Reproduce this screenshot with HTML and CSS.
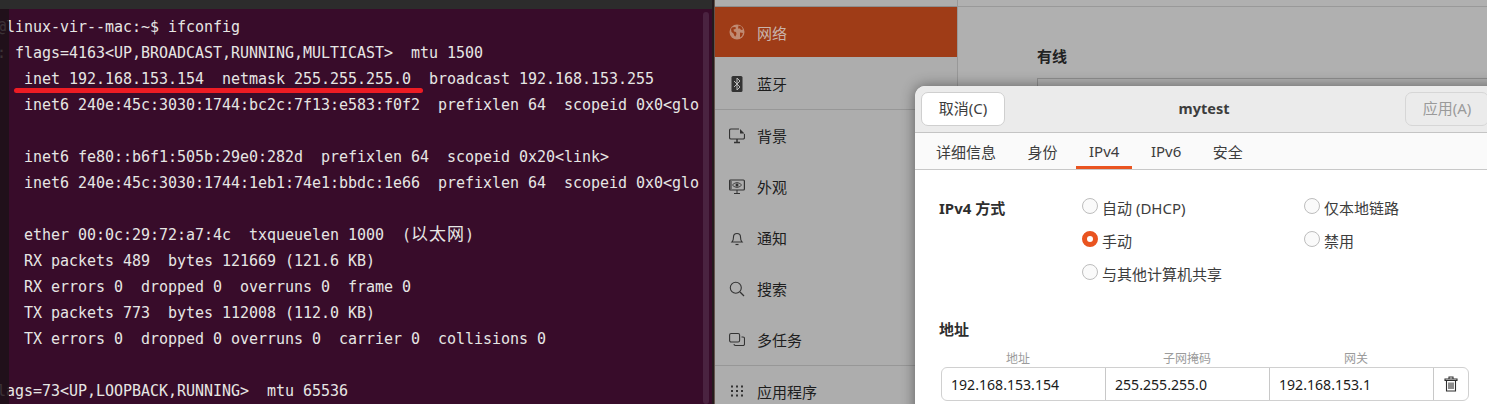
FILE: index.html
```html
<!DOCTYPE html>
<html lang="zh">
<head>
<meta charset="utf-8">
<title>ifconfig</title>
<link rel="stylesheet" href="styles.css">
</head>
<body>
<div class="screen">
  <section class="terminal">
    <div class="term-top"></div>
    <pre class="term-text">@linux-vir--mac:~$ ifconfig
: flags=4163&lt;UP,BROADCAST,RUNNING,MULTICAST&gt;  mtu 1500
   inet 192.168.153.154  netmask 255.255.255.0  broadcast 192.168.153.255
   inet6 240e:45c:3030:1744:bc2c:7f13:e583:f0f2  prefixlen 64  scopeid 0x0&lt;glo

   inet6 fe80::b6f1:505b:29e0:282d  prefixlen 64  scopeid 0x20&lt;link&gt;
   inet6 240e:45c:3030:1744:1eb1:74e1:bbdc:1e66  prefixlen 64  scopeid 0x0&lt;glo

   ether 00:0c:29:72:a7:4c  txqueuelen 1000  (<span class="cjk">以太网</span>)
   RX packets 489  bytes 121669 (121.6 KB)
   RX errors 0  dropped 0  overruns 0  frame 0
   TX packets 773  bytes 112008 (112.0 KB)
   TX errors 0  dropped 0 overruns 0  carrier 0  collisions 0

lags=73&lt;UP,LOOPBACK,RUNNING&gt;  mtu 65536</pre>
    <div class="term-strip"></div>
    <div class="term-scroll"></div>
    <div class="red-line"></div>
  </section>
  <div class="divider"></div>
  <section class="settings">
    <nav class="sidebar">
      <div class="side-top"></div>
      <div class="row active">
        <svg class="ico" viewBox="0 0 16 16"><circle cx="8" cy="8" r="7.5" fill="currentColor"/><path d="M3 3.500c1.500-.8 3-.8 4 0l-.5 1.500-2 .5.5 2 2 .5.5 2-1 2.500-1-.5-1-2.500-2-1.500-.5-3zM9.500 1.500l3 1 1.500 3-2 .5-1-1.500-2 0zM11 8.500l3 .5-1 3-2 1.500z" fill="#9f3c17"/></svg>
        <span>网络</span>
      </div>
      <div class="row sep-below">
        <svg class="ico" viewBox="0 0 16 16"><rect x="2.500" y="0" width="11" height="16" rx="1.500" fill="#333"/><path d="M5 5l6 6-3 3V2l3 3-6 6" fill="none" stroke="#bbb" stroke-width="1"/></svg>
        <span>蓝牙</span>
      </div>
      <div class="row">
        <svg class="ico" viewBox="0 0 16 16"><path d="M10 1H2a1.500 1.500 0 0 0-1.500 1.500v7A1.500 1.500 0 0 0 2 11h12a1.500 1.500 0 0 0 1.500-1.500V6" fill="none" stroke="#333" stroke-width="1.200"/><path d="M11 1l4.500 4.500H11z" fill="#333"/><path d="M5 14.500h6M8 11v3.500" stroke="#333" stroke-width="1.500"/></svg>
        <span>背景</span>
      </div>
      <div class="row">
        <svg class="ico" viewBox="0 0 16 16"><rect x=".6" y="1" width="14.800" height="10" rx="1" fill="none" stroke="#333" stroke-width="1.200"/><path d="M3.500 6c2.500-3 6.500-3 9 0-2.500 3-6.500 3-9 0z" fill="none" stroke="#333"/><circle cx="8" cy="6" r="1.500" fill="#333"/><path d="M1 3h2M1 5h2M1 7h2M1 9h2M5 14.500h6M8 11v3.500" stroke="#333"/></svg>
        <span>外观</span>
      </div>
      <div class="row">
        <svg class="ico" viewBox="0 0 16 16"><path d="M3 12c1-1 1.500-2 1.500-5a3.500 3.500 0 0 1 7 0c0 3 .5 4 1.500 5z" fill="none" stroke="#333" stroke-width="1.100"/><path d="M6.500 14.500h3" stroke="#333" stroke-width="1.200"/></svg>
        <span>通知</span>
      </div>
      <div class="row">
        <svg class="ico" viewBox="0 0 16 16"><circle cx="6.800" cy="6.800" r="5.500" fill="none" stroke="#333" stroke-width="1.100"/><path d="M11 11l4 4" stroke="#333" stroke-width="1.300"/></svg>
        <span>搜索</span>
      </div>
      <div class="row">
        <svg class="ico" viewBox="0 0 16 16"><rect x=".6" y="1.500" width="10" height="8.500" rx="1.500" fill="none" stroke="#333" stroke-width="1.100"/><path d="M12.500 5h1.500a1.500 1.500 0 0 1 1.500 1.500V12a1.500 1.500 0 0 1-1.500 1.500H6.500A1.500 1.500 0 0 1 5 12" fill="none" stroke="#333" stroke-width="1.100"/></svg>
        <span>多任务</span>
      </div>
      <div class="row sep-above">
        <svg class="ico" viewBox="0 0 16 16"><g fill="#333"><rect x="2" y="2.500" width="2" height="2"/><rect x="7" y="2.500" width="2" height="2"/><rect x="12" y="2.500" width="2" height="2"/><rect x="2" y="7" width="2" height="2"/><rect x="7" y="7" width="2" height="2"/><rect x="12" y="7" width="2" height="2"/><rect x="2" y="11.500" width="2" height="2"/><rect x="7" y="11.500" width="2" height="2"/><rect x="12" y="11.500" width="2" height="2"/></g></svg>
        <span>应用程序</span>
      </div>
    </nav>
    <main class="net-main">
      <div class="main-top"></div>
      <h2 class="wired-title">有线</h2>
      <div class="wired-box"></div>
    </main>
    <div class="dialog">
      <header class="dlg-head">
        <button class="btn">取消(C)</button>
        <strong class="dlg-title">mytest</strong>
        <button class="btn btn-off">应用(A)</button>
      </header>
      <div class="tabs">
        <span class="tab">详细信息</span>
        <span class="tab">身份</span>
        <span class="tab on">IPv4</span>
        <span class="tab">IPv6</span>
        <span class="tab">安全</span>
      </div>
      <div class="dlg-body">
        <div class="method">
          <b class="method-label">IPv4 方式</b>
          <div class="radios">
            <label class="radio"><i class="dot"></i>自动 (DHCP)</label>
            <label class="radio"><i class="dot"></i>仅本地链路</label>
            <label class="radio"><i class="dot dot-on"></i>手动</label>
            <label class="radio"><i class="dot"></i>禁用</label>
            <label class="radio"><i class="dot"></i>与其他计算机共享</label>
          </div>
        </div>
        <b class="addr-title">地址</b>
        <div class="addr-heads">
          <span>地址</span><span>子网掩码</span><span>网关</span>
        </div>
        <div class="addr-row">
          <div class="cell">192.168.153.154</div>
          <div class="cell">255.255.255.0</div>
          <div class="cell">192.168.153.1</div>
          <div class="trash">
            <svg viewBox="0 0 16 16" width="16" height="16"><path d="M6 2.500V1h4v1.500M2 3h12v1.500H2zM3.500 4.500V15h9V4.500" fill="none" stroke="#2e2e2e" stroke-width="1.100"/><path d="M6 6.500V13M8 6.500V13M10 6.500V13" stroke="#2e2e2e" stroke-width="1.100"/></svg>
          </div>
        </div>
      </div>
    </div>
  </section>
</div>
</body>
</html>
```

FILE: styles.css
```css
* { box-sizing: border-box; }
html, body { margin: 0; padding: 0; }
body { width: 1487px; height: 404px; overflow: hidden; font-family: "Noto Sans", "Noto Sans CJK SC", sans-serif; }
.screen { display: flex; width: 1487px; height: 404px; overflow: hidden; }

.terminal { position: relative; width: 712px; height: 404px; background: #380c2a; overflow: hidden; flex: none; }
.term-top { height: 9px; background: #2c2c2c; }
.term-text { margin: 5px 0 0 -3px; font: 15px/26px "DejaVu Sans Mono", monospace; letter-spacing: -0.03px; color: #e6e6e4; white-space: pre; }
.cjk { font-family: "Noto Sans CJK SC", sans-serif; font-size: 17px; letter-spacing: 1px; line-height: 1; }
.term-strip { position: absolute; left: 0; top: 9px; bottom: 0; width: 9px; background: rgba(28, 18, 24, 0.85); }
.term-scroll { position: absolute; left: 703px; top: 12px; bottom: 0; width: 6px; background: #4a2340; border-radius: 3px; }
.red-line { position: absolute; left: 14px; top: 88px; width: 409px; height: 5px; background: #ed1c24; border-radius: 2.500px; }

.divider { width: 3px; flex: none; background: linear-gradient(90deg, #241a1c, #241a1c 66%, #a08a78); }

.settings { position: relative; flex: 1; display: flex; height: 404px; background: #b0b0b0; }
.sidebar { width: 243px; flex: none; background: #adadad; border-right: 1px solid #989898; }
.side-top { height: 7px; border-bottom: 1px solid #8e8e8e; }
.row { height: 51px; display: flex; align-items: center; padding-left: 14px; gap: 12px; font-size: 15px; color: #1d1d1d; }
.row.active { height: 50px; background: #9f3c17; color: #c9b4ab; }
.row.sep-below { height: 53px; padding-top: 1px; border-bottom: 1px solid #979797; }
.row.sep-above { border-top: 1px solid #979797; }
.ico { width: 16px; height: 16px; flex: none; }
.active .ico { color: #c08a72; }

.net-main { flex: 1; padding-left: 79px; }
.main-top { height: 7px; border-bottom: 1px solid #999; margin-left: -79px; }
.wired-title { margin: 38px 0 0; font-size: 15px; line-height: 22px; font-weight: 700; color: #232323; }
.wired-box { height: 40px; margin-top: 11px; border: 1px solid #8f8f8f; border-right: 0; }

.dialog { position: absolute; left: 200px; top: 86px; width: 600px; height: 340px; background: #fff; border-radius: 10px 10px 0 0; box-shadow: 0 0 14px rgba(0, 0, 0, 0.45); overflow: hidden; }
.dlg-head { height: 47px; display: flex; align-items: center; padding: 0 0 0 6px; background: #ebebeb; border-bottom: 1px solid #c4c4c4; position: relative; }
.btn { width: 84px; height: 34px; padding: 0 0 3px; background: #fff; border: 1px solid #cfcfcf; border-radius: 7px; font: 15px "Noto Sans", "Noto Sans CJK SC", sans-serif; color: #3d3d3d; }
.btn-off { margin-left: auto; margin-right: 26px; background: #ebebeb; color: #9a9a9a; border-color: #d6d6d6; }
.dlg-title { position: absolute; left: 229px; width: 120px; padding-bottom: 2px; text-align: center; font-size: 14.500px; font-weight: 700; color: #3d3d3d; }

.tabs { height: 37px; display: flex; gap: 5.500px; padding-left: 8px; background: #fafafa; border-bottom: 1px solid #c8c8c8; }
.tab { height: 36px; padding: 0 13px; display: flex; align-items: center; font-size: 15px; color: #3d3d3d; }
.tab.on { border-bottom: 3px solid #e95420; padding-top: 3px; }

.dlg-body { padding: 25px 0 0 24px; color: #3d3d3d; font-size: 15px; }
.method { display: flex; }
.method-label { width: 143px; line-height: 22px; padding-top: 2px; color: #2e2e2e; }
.radios { display: grid; grid-template-columns: 222px 160px; grid-auto-rows: 33px; }
.radio { display: flex; align-items: center; gap: 4px; height: 24px; white-space: nowrap; }
.dot { display: block; width: 16px; height: 16px; border-radius: 50%; border: 1px solid #bdbdbd; background: #fafafa; margin-top: -2px; }
.dot-on { border: 5px solid #e95420; background: #fff; }
.addr-title { display: block; margin-top: 24px; line-height: 22px; color: #2e2e2e; }
.addr-heads { display: grid; grid-template-columns: 154px 184px 154px; margin: 12px 0 0 2px; font-size: 12px; line-height: 14px; color: #9b9b9b; text-align: center; }
.addr-row { display: flex; width: 528px; height: 34px; margin: 1px 0 0 2px; border: 1px solid #d0d0d0; border-radius: 6px; }
.cell { width: 164px; padding: 2px 0 0 9px; line-height: 30px; color: #1a1a1a; border-right: 1px solid #c8c8c8; font-size: 14.100px; }
.trash { flex: 1; display: flex; align-items: center; justify-content: center; }
```
